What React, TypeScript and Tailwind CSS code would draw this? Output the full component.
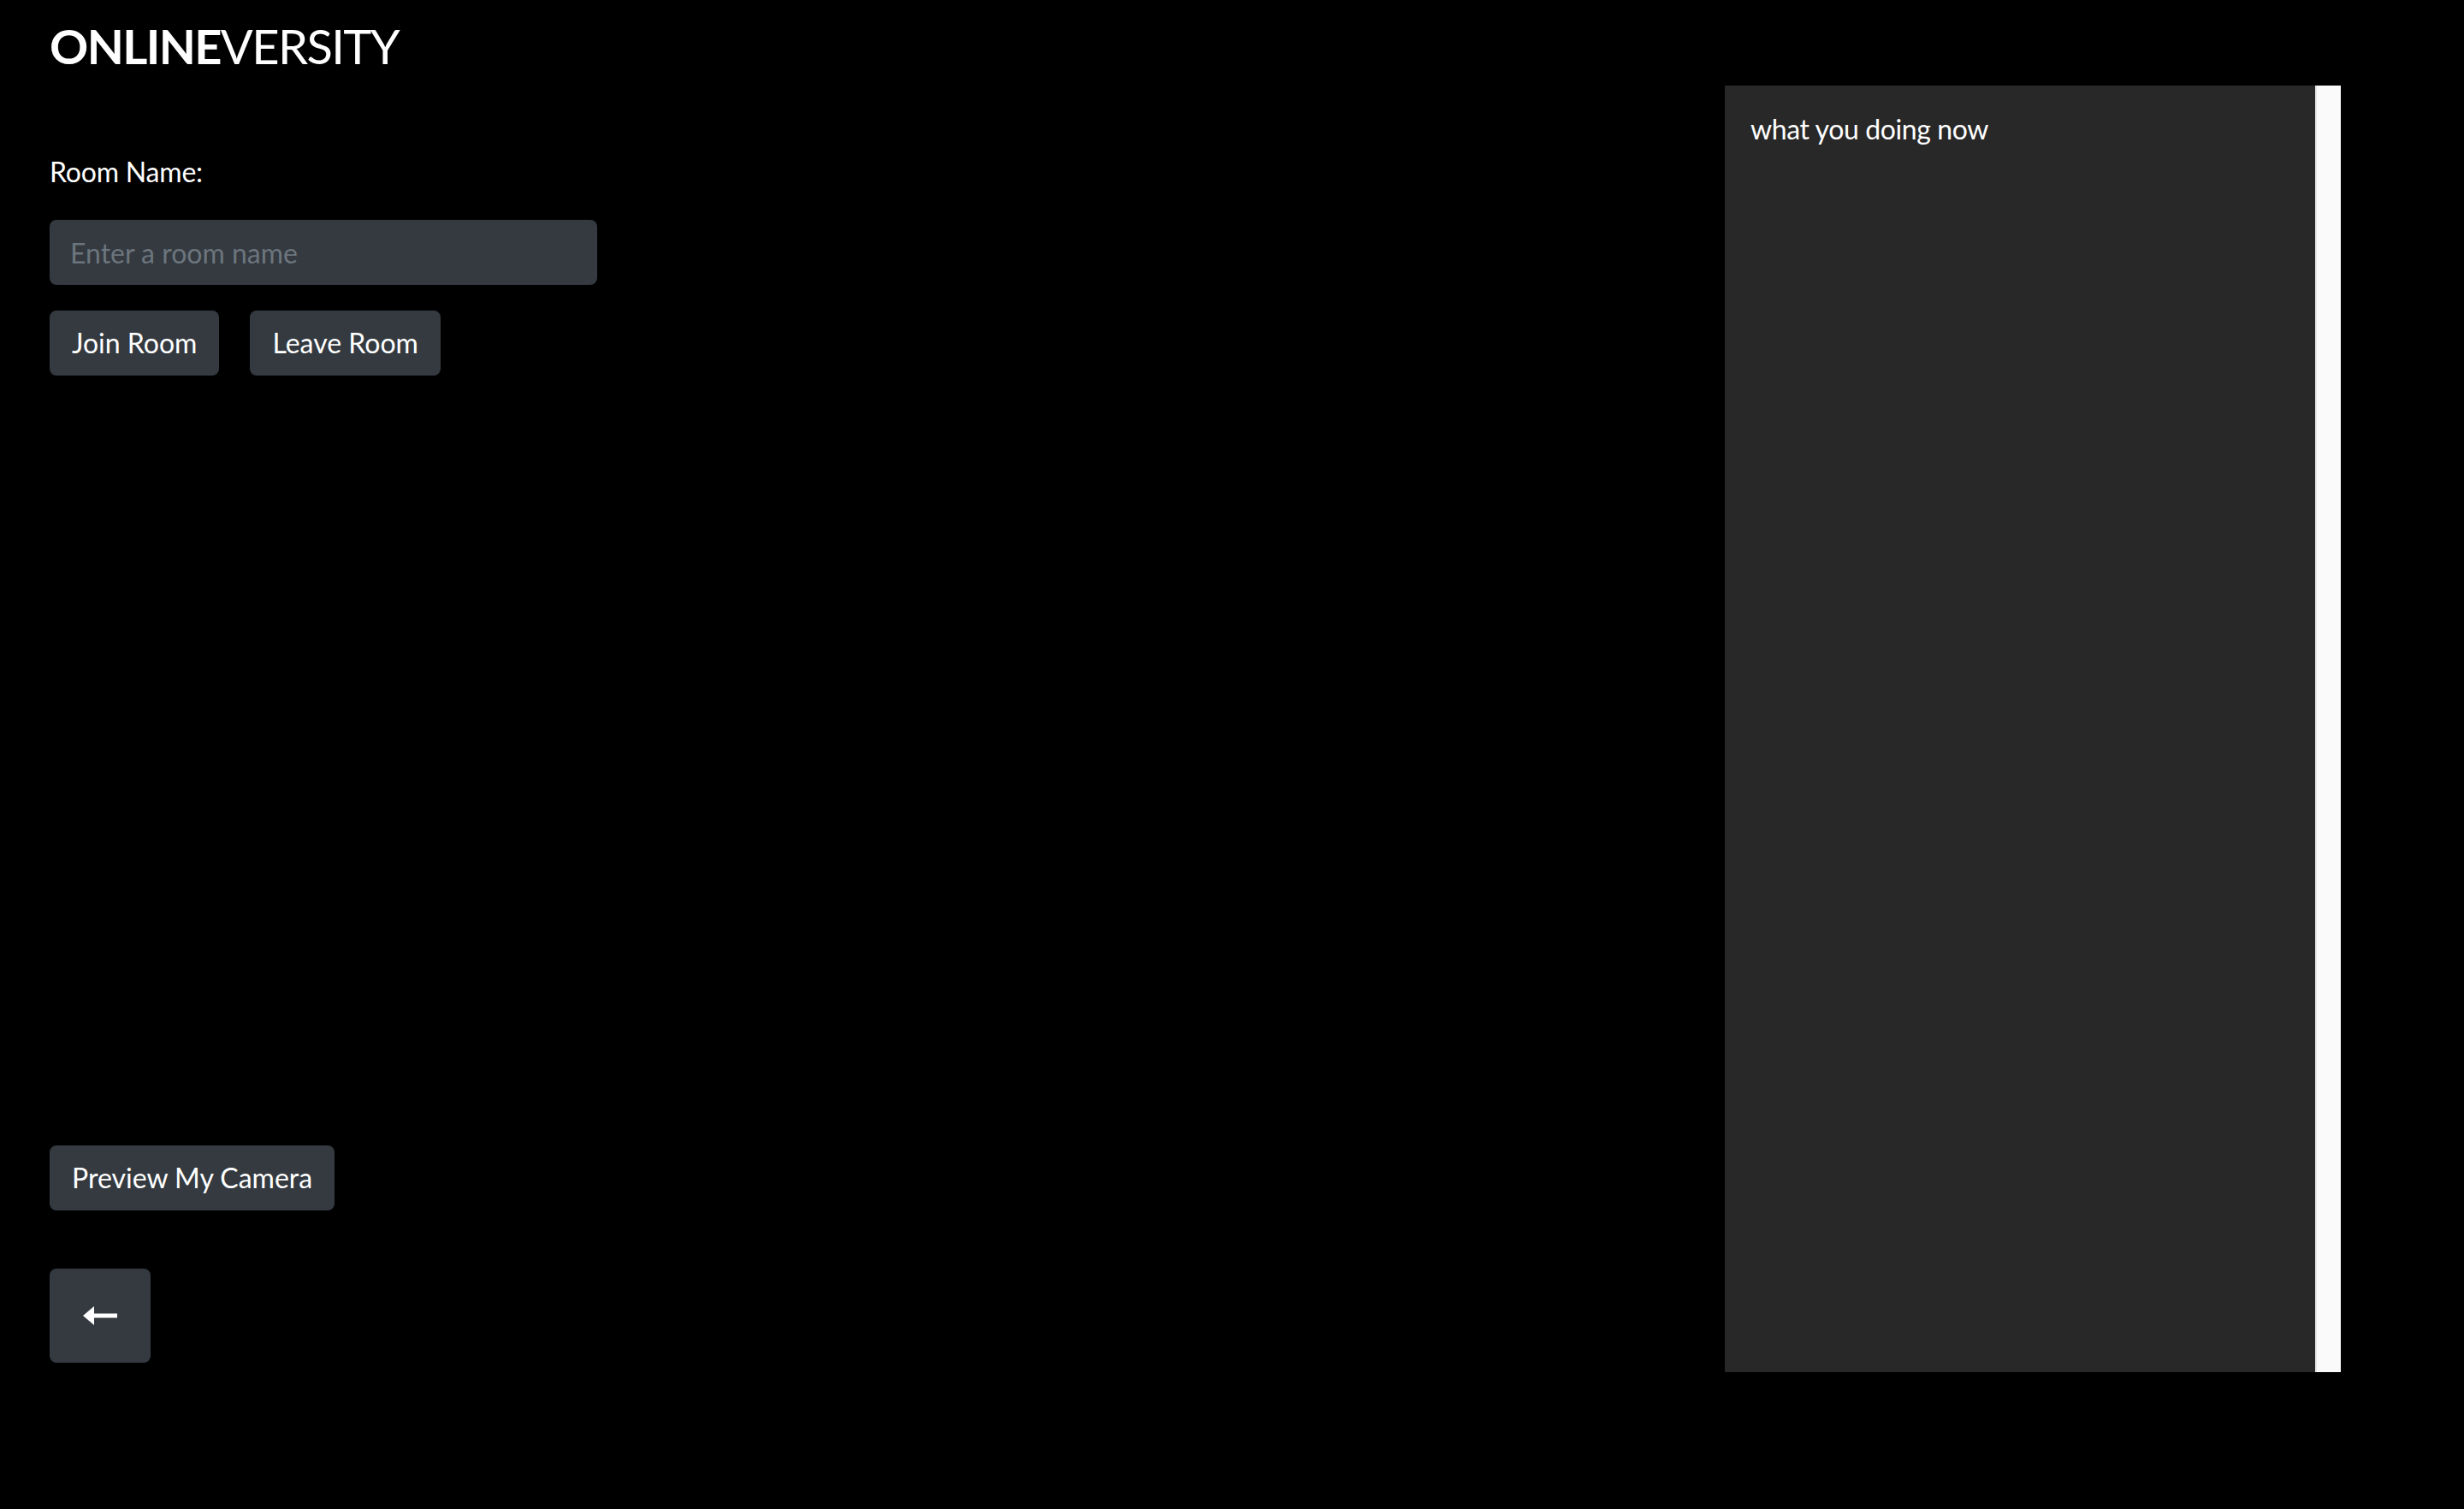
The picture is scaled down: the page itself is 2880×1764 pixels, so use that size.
import { useState } from 'react'

// ── Back arrow ────────────────────────────────────────────────────────────────

function ArrowLeft() {
  return (
    <svg width="40" height="22" viewBox="0 0 20 11" fill="white">
      <polygon points="0,5.5 6.5,0 6.5,11" />
      <rect x="5" y="4.25" width="15" height="2.5" />
    </svg>
  )
}

// ── Page ──────────────────────────────────────────────────────────────────────

export default function App() {
  const [room, setRoom] = useState('')

  const btn =
    'inline-flex items-center h-[76px] px-6 rounded-lg border-2 border-[#343a40] bg-[#343a40] text-white text-[32px] leading-[48px] hover:bg-[#23272b]'

  return (
    <div
      className="min-h-[1764px] bg-black text-white flex"
      style={{ fontFamily: 'Lato, "Noto Sans", sans-serif' }}
    >
      {/* Left column */}
      <div className="flex-1 pl-[58px] pt-[20px] flex flex-col">
        <h1 className="text-[56px] leading-[1.2] tracking-[-1.6px] text-white">
          <span className="font-bold">ONLINE</span>
          <span className="font-normal">VERSITY</span>
        </h1>

        <label htmlFor="room" className="mt-[90px] text-[32px] leading-[48px] tracking-[-0.2px] block">
          Room Name:
        </label>
        <input
          id="room"
          value={room}
          onChange={e => setRoom(e.target.value)}
          placeholder="Enter a room name"
          className="mt-[32px] w-[640px] h-[76px] px-6 rounded-lg bg-[#343a40] text-white text-[32px] placeholder:text-[#6c757d] outline-none"
        />

        <div className="flex gap-[36px] mt-[30px]">
          <button className={btn}>Join Room</button>
          <button className={btn}>Leave Room</button>
        </div>

        <div className="mt-[900px]">
          <button className={btn}>Preview My Camera</button>
        </div>

        <div className="mt-[68px]">
          <button className="w-[118px] h-[110px] rounded-lg bg-[#343a40] flex items-center justify-center">
            <ArrowLeft />
          </button>
        </div>
      </div>

      {/* Chat panel */}
      <div className="w-[720px] h-[1504px] mt-[100px] mr-[144px] flex">
        <div className="flex-1 bg-[#282828] px-[30px] pt-[27px]">
          <p className="text-[32px] leading-[48px] tracking-[-0.4px]">what you doing now</p>
        </div>
        <div className="w-[30px] bg-[#fafafa] border-l-2 border-[#e6e6e6]" />
      </div>
    </div>
  )
}
